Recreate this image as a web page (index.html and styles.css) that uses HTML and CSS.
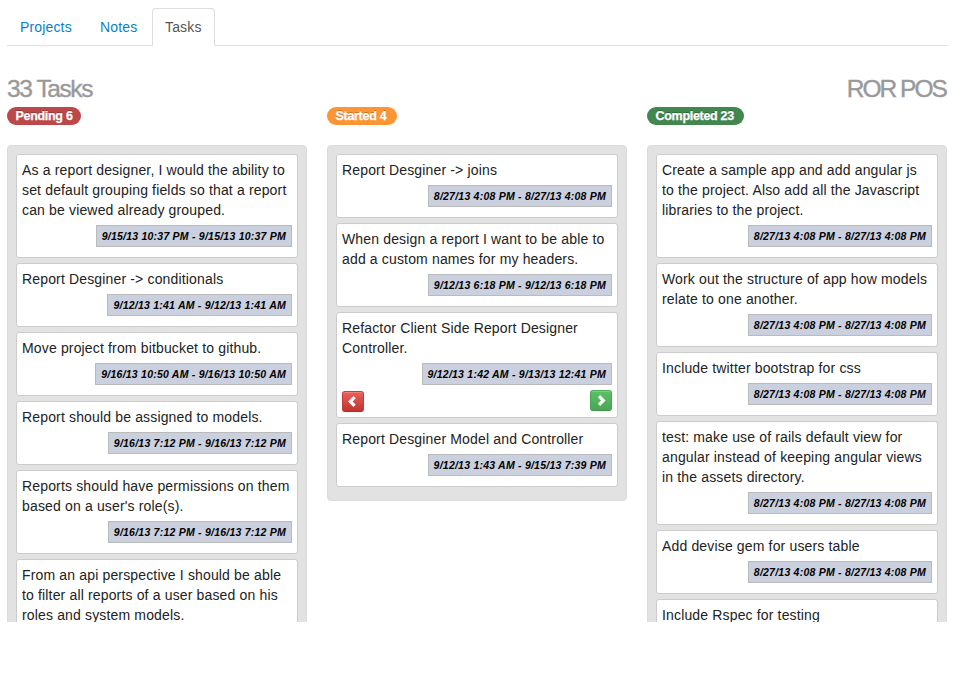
FILE: index.html
```html
<!DOCTYPE html>
<html lang="en">
<head>
<meta charset="utf-8">
<title>Tasks</title>
<link rel="stylesheet" href="styles.css">
</head>
<body>
<nav class="tabs">
  <a class="tab projects" href="#">Projects</a>
  <a class="tab notes" href="#">Notes</a>
  <a class="tab active" href="#">Tasks</a>
</nav>
<header class="heading">
  <h3>33 Tasks</h3>
  <h3 class="project-name">ROR POS</h3>
</header>
<div class="board">
  <section>
    <div class="label pending">Pending 6</div>
    <div class="panel">
      <article class="card"><p>As a report designer, I would the ability to<br>set default grouping fields so that a report<br>can be viewed already grouped.</p><time>9/15/13 10:37 PM - 9/15/13 10:37 PM</time></article>
      <article class="card"><p>Report Desginer -&gt; conditionals</p><time>9/12/13 1:41 AM - 9/12/13 1:41 AM</time></article>
      <article class="card"><p>Move project from bitbucket to github.</p><time>9/16/13 10:50 AM - 9/16/13 10:50 AM</time></article>
      <article class="card"><p>Report should be assigned to models.</p><time>9/16/13 7:12 PM - 9/16/13 7:12 PM</time></article>
      <article class="card"><p>Reports should have permissions on them<br>based on a user's role(s).</p><time>9/16/13 7:12 PM - 9/16/13 7:12 PM</time></article>
      <article class="card"><p>From an api perspective I should be able<br>to filter all reports of a user based on his<br>roles and system models.</p></article>
    </div>
  </section>
  <section>
    <div class="label started">Started 4</div>
    <div class="panel">
      <article class="card"><p>Report Desginer -&gt; joins</p><time>8/27/13 4:08 PM - 8/27/13 4:08 PM</time></article>
      <article class="card"><p>When design a report I want to be able to<br>add a custom names for my headers.</p><time>9/12/13 6:18 PM - 9/12/13 6:18 PM</time></article>
      <article class="card with-actions"><p>Refactor Client Side Report Designer<br>Controller.</p><time>9/12/13 1:42 AM - 9/13/13 12:41 PM</time>
        <div class="actions">
          <button class="btn back" aria-label="Move back"><svg viewBox="0 0 14 14"><path d="M8.6 2.2 4.3 6.5l4.3 4.3"/></svg></button>
          <button class="btn forward" aria-label="Move forward"><svg viewBox="0 0 14 14"><path d="M5 2.2 9.3 6.5 5 10.8"/></svg></button>
        </div>
      </article>
      <article class="card"><p>Report Desginer Model and Controller</p><time>9/12/13 1:43 AM - 9/15/13 7:39 PM</time></article>
    </div>
  </section>
  <section>
    <div class="label completed">Completed 23</div>
    <div class="panel">
      <article class="card"><p>Create a sample app and add angular js<br>to the project. Also add all the Javascript<br>libraries to the project.</p><time>8/27/13 4:08 PM - 8/27/13 4:08 PM</time></article>
      <article class="card"><p>Work out the structure of app how models<br>relate to one another.</p><time>8/27/13 4:08 PM - 8/27/13 4:08 PM</time></article>
      <article class="card"><p>Include twitter bootstrap for css</p><time>8/27/13 4:08 PM - 8/27/13 4:08 PM</time></article>
      <article class="card"><p>test: make use of rails default view for<br>angular instead of keeping angular views<br>in the assets directory.</p><time>8/27/13 4:08 PM - 8/27/13 4:08 PM</time></article>
      <article class="card"><p>Add devise gem for users table</p><time>8/27/13 4:08 PM - 8/27/13 4:08 PM</time></article>
      <article class="card"><p>Include Rspec for testing</p></article>
    </div>
  </section>
</div>
</body>
</html>
```
FILE: styles.css
```css
* { box-sizing: border-box; }
body {
  margin: 0;
  padding: 8px 17px 0 7px;
  background: #fff;
  color: #222;
  font: 14px/20px "Liberation Sans", Arial, sans-serif;
  letter-spacing: 0.155px;
  overflow: hidden;
}
.tabs {
  display: flex;
  height: 38px;
  border-bottom: 1px solid #ddd;
}
.tab {
  height: 38px;
  margin-right: 2px;
  padding: 8px 12px 0;
  border: 1px solid transparent;
  border-radius: 4px 4px 0 0;
  color: #0a7fc4;
  text-decoration: none;
  white-space: nowrap;
}
.projects { width: 78px; }
.notes { width: 63px; }
.active {
  width: 63px;
  margin: 0;
  border-color: #ddd #ddd #fff;
  background: #fff;
  color: #555;
}
.heading {
  display: flex;
  justify-content: space-between;
  height: 61px;
  padding-top: 23px;
  color: #999;
}
h3 {
  margin: 0;
  font-size: 24.5px;
  font-weight: normal;
  line-height: 40px;
  letter-spacing: -1.4px;
  -webkit-text-stroke: .4px #999;
}
.project-name { letter-spacing: -1.95px; margin-right: 1px; }
.board {
  display: grid;
  grid-template-columns: repeat(3, 300px);
  gap: 20px;
  height: 515px;
  overflow: hidden;
}
.label {
  width: fit-content;
  height: 18px;
  margin-bottom: 20px;
  padding: 0 8.5px;
  border-radius: 9px;
  color: #fff;
  font-size: 12.5px;
  font-weight: bold;
  line-height: 18px;
  letter-spacing: -0.3px;
  text-shadow: 0 -1px 0 rgba(0, 0, 0, .25);
  -webkit-text-stroke: .25px #fff;
  white-space: nowrap;
}
.pending { width: 74px; background: #bd4849; }
.started { width: 70px; background: #fd9535; }
.completed { width: 97px; background: #41874e; }
.panel {
  padding: 8px 8px 8px;
  border: 1px solid #dbdbdb;
  border-radius: 4px;
  background: #e2e2e2;
}
.card {
  display: flex;
  flex-direction: column;
  width: 282px;
  margin-bottom: 5px;
  padding: 5px 5px 10px;
  border: 1px solid #ccc;
  border-radius: 3px;
  background: #fff;
}
.card p { margin: 0 0 5px; white-space: nowrap; }
time {
  align-self: flex-end;
  height: 22px;
  padding: 0 5px;
  border: 1px solid #bbb;
  background: #cbd0df;
  color: #000;
  font-size: 10.5px;
  font-style: italic;
  font-weight: bold;
  line-height: 20px;
  letter-spacing: 0.23px;
  white-space: nowrap;
}
.with-actions { padding-bottom: 5px; }
.actions {
  display: flex;
  justify-content: space-between;
  height: 27px;
  padding-top: 5px;
}
.btn {
  width: 22px;
  height: 21px;
  padding: 0;
  display: grid;
  place-items: center;
  border: 1px solid;
  border-radius: 3px;
  box-shadow: inset 0 1px 0 rgba(255, 255, 255, .2), 0 1px 2px rgba(0, 0, 0, .05);
}
.btn svg { width: 14px; height: 14px; fill: none; stroke: #fff; stroke-width: 3.2; }
.back { margin-top: 1px; border-color: #c93e3b #c53b38 #ad302c; background: linear-gradient(#ee5f5b, #bd362f); }
.forward { border-color: #50ae5b #4aa456 #429349; background: linear-gradient(#5bc168, #4ba555); }
```
